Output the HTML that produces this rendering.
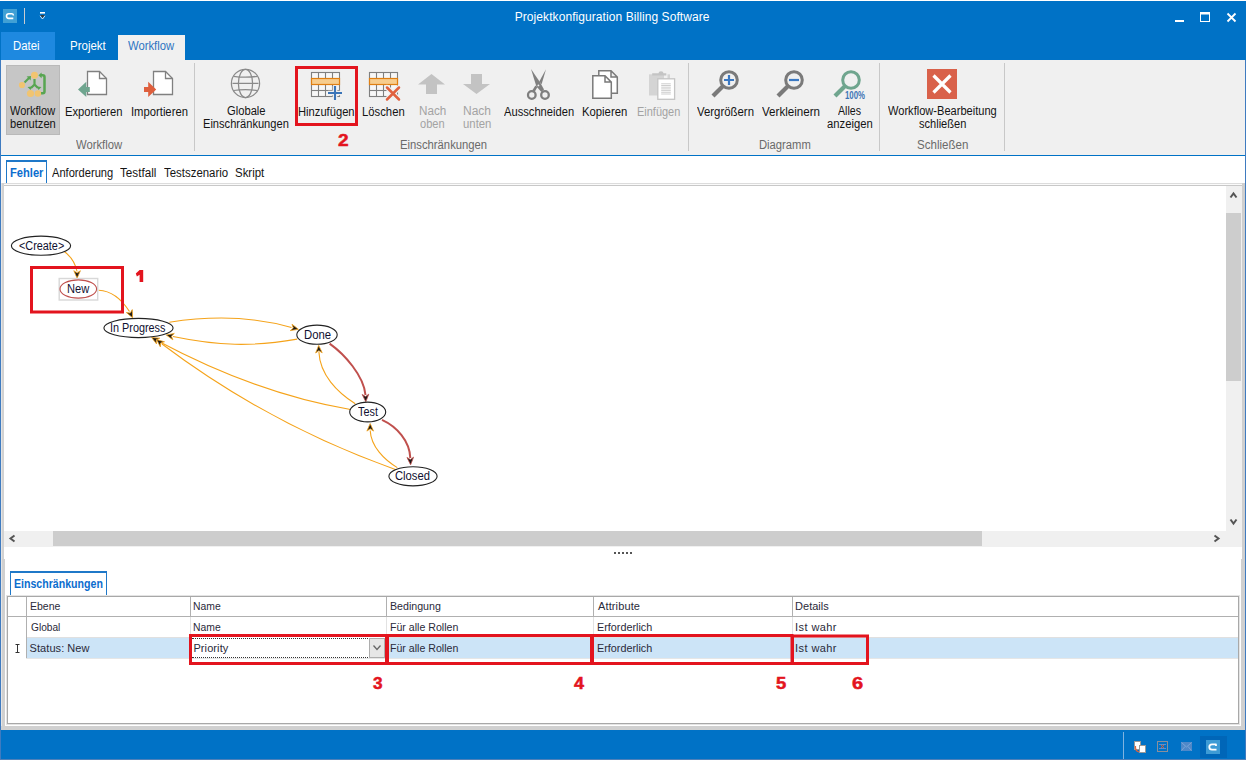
<!DOCTYPE html>
<html><head><meta charset="utf-8">
<style>
*{box-sizing:border-box}
html,body{margin:0;padding:0;width:1247px;height:760px;overflow:hidden;background:#ffffff;font-family:"Liberation Sans",sans-serif}
.a{position:absolute}
.tx{position:absolute;line-height:30px;white-space:nowrap;font-family:"Liberation Sans",sans-serif}
svg{position:absolute;left:0;top:0;overflow:visible}
</style></head><body>
<!-- window frame -->
<div class="a" style="left:0;top:1px;width:1246px;height:759px;background:#0072c6"></div>
<!-- file tab -->
<div class="a" style="left:1px;top:32px;width:54px;height:28px;background:#1e89e0"></div>
<!-- workflow tab -->
<div class="a" style="left:118px;top:35px;width:67px;height:25px;background:#f0f0f0"></div>
<!-- ribbon -->
<div class="a" style="left:1px;top:60px;width:1244px;height:95px;background:#f0f0f0"></div>
<!-- separators -->
<div class="a" style="left:194px;top:63px;width:1px;height:88px;background:#c8c8c8"></div>
<div class="a" style="left:688px;top:63px;width:1px;height:88px;background:#c8c8c8"></div>
<div class="a" style="left:879px;top:63px;width:1px;height:88px;background:#c8c8c8"></div>
<div class="a" style="left:1004px;top:63px;width:1px;height:88px;background:#c8c8c8"></div>
<!-- pressed button -->
<div class="a" style="left:6px;top:65px;width:54px;height:70px;background:#c6c6c6;border:1px solid #b9b9b9"></div>
<!-- content area -->
<div class="a" style="left:1px;top:156px;width:1244px;height:574px;background:#ffffff"></div>
<!-- doc tab -->
<div class="a" style="left:6px;top:160px;width:41px;height:24px;border:1px solid #1f78c8;border-top:2px solid #1f78c8;border-bottom:none;background:#fff"></div>
<div class="a" style="left:2px;top:183px;width:1241px;height:1px;background:#dcdcdc"></div>
<div class="a" style="left:3px;top:184px;width:1240px;height:1px;background:#fafafa"></div>
<div class="a" style="left:3px;top:185px;width:1240px;height:1px;background:#c8c8c8"></div>
<!-- diagram panel borders -->
<div class="a" style="left:1px;top:183px;width:3px;height:376px;background:#d2d2d2"></div><div class="a" style="left:1px;top:183px;width:1px;height:376px;background:#e4e4e4"></div>
<div class="a" style="left:1242px;top:183px;width:3px;height:376px;background:#cfcfcf"></div>
<!-- v scrollbar -->
<div class="a" style="left:1226px;top:186px;width:16px;height:345px;background:#f0f0f0"></div>
<div class="a" style="left:1226px;top:213px;width:15px;height:168px;background:#cdcdcd"></div>
<svg width="1247" height="760">
<path d="M1230.5 197.5 L1233.5 193.5 L1236.5 197.5" fill="none" stroke="#555" stroke-width="2"/>
<path d="M1230.5 519.5 L1233.5 523.5 L1236.5 519.5" fill="none" stroke="#555" stroke-width="2"/>
</svg>
<!-- h scrollbar -->
<div class="a" style="left:4px;top:531px;width:1238px;height:16px;background:#f0f0f0"></div>
<div class="a" style="left:53px;top:531px;width:929px;height:15px;background:#cdcdcd"></div>
<svg width="1247" height="760">
<path d="M14.5 535.5 L10.5 538.5 L14.5 541.5" fill="none" stroke="#555" stroke-width="2"/>
<path d="M1214.5 535.5 L1218.5 538.5 L1214.5 541.5" fill="none" stroke="#555" stroke-width="2"/>
</svg>
<!-- splitter dots -->
<div class="a" style="left:614px;top:552px;width:2px;height:2px;background:#555"></div>
<div class="a" style="left:618px;top:552px;width:2px;height:2px;background:#555"></div>
<div class="a" style="left:622px;top:552px;width:2px;height:2px;background:#555"></div>
<div class="a" style="left:626px;top:552px;width:2px;height:2px;background:#555"></div>
<div class="a" style="left:630px;top:552px;width:2px;height:2px;background:#555"></div>
<!-- bottom panel left/right borders -->
<div class="a" style="left:1px;top:559px;width:4px;height:171px;background:#d0d0d0"></div><div class="a" style="left:1px;top:559px;width:1px;height:171px;background:#e4e4e4"></div>
<div class="a" style="left:1241px;top:559px;width:4px;height:171px;background:#d0d0d0"></div>
<div class="a" style="left:1px;top:726px;width:1244px;height:4px;background:#d0d0d0"></div>
<!-- bottom tab -->
<div class="a" style="left:10px;top:571px;width:97px;height:24px;border:1px solid #1f78c8;border-top:2px solid #1f78c8;border-bottom:none;background:#fff"></div>
<!-- grid -->
<div class="a" style="left:6px;top:595px;width:1234px;height:130px;border:1px solid #e4e4e4"></div>
<div class="a" style="left:7px;top:596px;width:1232px;height:128px;border:1px solid #a8a8a8"></div>
<div class="a" style="left:8px;top:616px;width:1230px;height:1px;background:#b0b0b0"></div>
<div class="a" style="left:26px;top:638px;width:1212px;height:20px;background:#cce4f7"></div>
<div class="a" style="left:27px;top:637px;width:1211px;height:1px;background:#e0e0e0"></div>
<div class="a" style="left:26px;top:658px;width:1212px;height:1px;background:#e6e6e6"></div>
<div class="a" style="left:26px;top:597px;width:1px;height:61px;background:#b0b0b0"></div>
<div class="a" style="left:190px;top:597px;width:1px;height:19px;background:#b0b0b0"></div>
<div class="a" style="left:386px;top:597px;width:1px;height:19px;background:#b0b0b0"></div>
<div class="a" style="left:593px;top:597px;width:1px;height:19px;background:#b0b0b0"></div>
<div class="a" style="left:792px;top:597px;width:1px;height:19px;background:#b0b0b0"></div>
<div class="a" style="left:190px;top:617px;width:1px;height:20px;background:#e2e2e2"></div>
<div class="a" style="left:386px;top:617px;width:1px;height:20px;background:#e2e2e2"></div>
<div class="a" style="left:593px;top:617px;width:1px;height:20px;background:#e2e2e2"></div>
<div class="a" style="left:792px;top:617px;width:1px;height:20px;background:#e2e2e2"></div>
<!-- dropdown editor -->
<div class="a" style="left:191px;top:637px;width:195px;height:21px;background:#fff"></div>
<div class="a" style="left:192px;top:638px;width:178px;height:20px;border:1px dotted #333;border-left:none;border-right:none"></div>
<div class="a" style="left:369px;top:638px;width:16px;height:20px;background:#e6e6e6;border:1px solid #adadad"></div>
<svg width="1247" height="760">
<path d="M373.5 645.5 L377 649.5 L380.5 645.5" fill="none" stroke="#666" stroke-width="1.3"/>
<!-- I-beam cursor -->
<path d="M15.5 644.5 H19.5 M17.5 644.5 V652.5 M15.5 652.5 H19.5" fill="none" stroke="#333" stroke-width="1"/>
</svg>
<!-- status bar -->
<div class="a" style="left:1123px;top:732px;width:1px;height:27px;background:#7fb3e0"></div>
<div class="a" style="left:0;top:60px;width:1px;height:700px;background:#3f7bc0"></div>
<div class="a" style="left:1245px;top:60px;width:1px;height:700px;background:#3f7bc0"></div>
<div class="a" style="left:0;top:759px;width:1246px;height:1px;background:#4f80b8"></div>
<!-- ANNOT -->
<svg width="1247" height="760"><rect x="3" y="9" width="14" height="14" fill="#40a0d5"/>
<path d="M8.8 13.8 H12 Q13.4 13.8 13.4 15.6 M13.3 18.4 H8.8 A2.3 2.3 0 0 1 8.8 13.8" fill="none" stroke="#fff" stroke-width="1.6"/>
<rect x="24" y="8" width="1" height="16" fill="#c9ccd0"/>
<rect x="40" y="12" width="5" height="1.6" fill="#fff"/>
<path d="M40.3 15 H44.7 L42.5 18 Z" fill="#3a3a3a"/><path d="M40 15.8 L42.5 19 L45 15.8" fill="none" stroke="#fff" stroke-width="0.8"/>
<rect x="1175" y="20" width="9" height="2" fill="#fff"/>
<rect x="1200.5" y="12.5" width="9" height="9" fill="none" stroke="#fff" stroke-width="1"/><rect x="1200" y="12" width="10" height="2.5" fill="#fff"/>
<path d="M1227.5 13.5 L1235.5 21.5 M1235.5 13.5 L1227.5 21.5" stroke="#fff" stroke-width="1.8"/>
<path d="M24.5 82.5 L29.5 77.5" stroke="#58a552" stroke-width="2.2"/><path d="M31 76 L26.6 76.4 L30.6 80.4 Z" fill="#58a552"/>
<path d="M34.5 79 V84.5 L31 88 M34.5 84.5 L38 88" stroke="#58a552" stroke-width="2.2" fill="none"/>
<path d="M30.5 90 L27.5 87 L32 86.5 Z M38.5 90 L41.5 87 L37 86.5 Z" fill="#58a552"/>
<path d="M40.5 75.3 H42.8 Q44.5 75.3 44.5 77 V91.6 Q44.5 93.3 42.8 93.3 H40.5" stroke="#58a552" stroke-width="2.5" fill="none"/><path d="M38.4 75.3 L41.6 72.4 L41.6 78.2 Z" fill="#58a552"/>
<circle cx="34.5" cy="75.3" r="3.5" fill="#f1c470"/>
<circle cx="22" cy="85" r="3.1" fill="#f1c470"/>
<circle cx="30.5" cy="93.5" r="3.6" fill="#f1c470"/>
<circle cx="37.9" cy="93.5" r="3.2" fill="#f1c470"/>
<path d="M87.5 71.5 H99.5 L106.5 78.5 V94.5 H87.5 Z" fill="#fff" stroke="#808080" stroke-width="1.3" stroke-linejoin="miter"/><path d="M99.5 71.5 V78.5 H106.5" fill="none" stroke="#808080" stroke-width="1.3"/>
<path d="M78 89.4 L86.3 81.8 V87 H89.8 V91.9 H86.3 V97 Z" fill="#6fa58f" stroke="#f0f0f0" stroke-width="0" />
<path d="M153.5 71.5 H165.5 L172.5 78.5 V94.5 H153.5 Z" fill="#fff" stroke="#808080" stroke-width="1.3" stroke-linejoin="miter"/><path d="M165.5 71.5 V78.5 H172.5" fill="none" stroke="#808080" stroke-width="1.3"/>
<path d="M156.2 89.4 L148.2 81.8 V87 H144 V91.9 H148.2 V97 Z" fill="#de5f3d"/>
<g fill="none" stroke="#8a8a8a" stroke-width="1.25"><circle cx="245.5" cy="83.4" r="14.1"/><ellipse cx="245.5" cy="83.4" rx="7.1" ry="14.1"/><path d="M232.5 83.4 H258.5 M233.5 76.3 Q245.5 78 257.5 76.3 M233.5 90.5 Q245.5 88.8 257.5 90.5"/></g>
<g fill="none" stroke="#7f7f7f" stroke-width="1.1"><rect x="311.5" y="72.5" width="28" height="24" fill="#f7f7f7"/><path d="M318.5 72.5 V96.5"/><path d="M325.5 72.5 V96.5"/><path d="M332.5 72.5 V96.5"/><path d="M311.5 90.5 H339.5"/></g><rect x="311.5" y="78.5" width="28" height="6" fill="#f7cd8e" stroke="#e07f12" stroke-width="1.2"/>
<path d="M335 86 V100 M328 93 H342" stroke="#f0f0f0" stroke-width="4.6"/>
<path d="M335 86 V100 M328 93 H342" stroke="#3a74b8" stroke-width="2.1"/>
<g fill="none" stroke="#7f7f7f" stroke-width="1.1"><rect x="369.5" y="72.5" width="28" height="24" fill="#f7f7f7"/><path d="M376.5 72.5 V96.5"/><path d="M383.5 72.5 V96.5"/><path d="M390.5 72.5 V96.5"/><path d="M369.5 90.5 H397.5"/></g><rect x="369.5" y="78.5" width="28" height="6" fill="#f7cd8e" stroke="#e07f12" stroke-width="1.2"/>
<path d="M387 87.5 L399 99.5 M399 87.5 L387 99.5" stroke="#f0f0f0" stroke-width="5" stroke-linecap="round"/>
<path d="M387 87.5 L399 99.5 M399 87.5 L387 99.5" stroke="#e0603e" stroke-width="2.5" stroke-linecap="round"/>
<path d="M431.5 74 L445 84.5 H437 V94 H426 V84.5 H418 Z" fill="#c3c3c3"/>
<path d="M476.5 94 L490 84 H482 V74 H471 V84 H463 Z" fill="#c3c3c3"/>
<path d="M531 69 L540.2 82.6 L544 89.6 L541.4 92 L536.4 86.4 Z" fill="#7f7f7f"/>
<path d="M546 69.2 L541.6 84.2 L539.3 81.6 Z" fill="#7f7f7f"/>
<path d="M537.3 87.2 L534.6 92 L532.2 90.6 L535.4 85.6 Z" fill="#7f7f7f"/>
<g fill="none" stroke="#7f7f7f" stroke-width="2.3"><circle cx="531.8" cy="95" r="3.8"/><circle cx="545" cy="95" r="3.8"/></g>
<circle cx="538.4" cy="85.4" r="0.9" fill="#f0f0f0"/>
<path d="M598.8 70.7 H611 L617.3 77 V93.3 H598.8 Z M611 70.7 V77 H617.3" fill="#fff" stroke="#7a7a7a" stroke-width="1.5"/>
<path d="M592.8 75.8 H605 L611.3 82.1 V98.2 H592.8 Z M605 75.8 V82.1 H611.3" fill="#fff" stroke="#7a7a7a" stroke-width="1.5"/>
<rect x="649" y="74.3" width="15" height="21.2" fill="#d4d4d4"/><rect x="667.5" y="74.3" width="2.5" height="5" fill="#d4d4d4"/>
<path d="M652.2 75.5 V73.3 H658.5 A2.5 2 0 0 1 663.5 73.3 H666.3 V75.5 Z" fill="#c4c4c4"/>
<rect x="657.8" y="78.8" width="16.8" height="20.5" fill="#fff" stroke="#c4c4c4" stroke-width="1.3"/>
<path d="M661.2 83.8 H670.8 M661.2 85.5 H670.8 M661.2 87.2 H670.8 M661.2 88.9 H670.8 M661.2 90.6 H670.8 M661.2 92.3 H670.8 M661.2 94 H670.8" stroke="#c8c8c8" stroke-width="0.9"/>
<g fill="none" stroke="#7a7a7a"><circle cx="729" cy="80" r="8.3" stroke-width="3"/><path d="M722.8 86.2 L713 96" stroke-width="4.2" stroke-linecap="butt"/></g>
<path d="M729 75 V85 M724 80 H734" stroke="#3a78c2" stroke-width="2.2"/>
<g fill="none" stroke="#7a7a7a"><circle cx="794" cy="80" r="8.3" stroke-width="3"/><path d="M787.8 86.2 L778 96" stroke-width="4.2" stroke-linecap="butt"/></g>
<path d="M789 80 H799" stroke="#3a78c2" stroke-width="2.2"/>
<g fill="none" stroke="#6fa58e"><circle cx="851" cy="80" r="8.3" stroke-width="3"/><path d="M844.8 86.2 L835 96" stroke-width="4.2" stroke-linecap="butt"/></g>
<text x="845" y="99" font-family="Liberation Sans" font-size="10.3" font-weight="700" fill="#3d74b5" textLength="20" lengthAdjust="spacingAndGlyphs">100%</text>
<rect x="927" y="69" width="30" height="30" fill="#d9614a"/><path d="M933.5 75.5 L950.5 92.5 M950.5 75.5 L933.5 92.5" stroke="#fff" stroke-width="3.2"/>
<g><rect x="1134.5" y="741.5" width="6" height="8" fill="#fff" stroke="#999"/><rect x="1139.5" y="745.5" width="6" height="7" fill="#fff" stroke="#999"/><path d="M1135.5 746 Q1135 751 1139 752" stroke="#e0603a" fill="none" stroke-width="1.2"/></g>
<g><rect x="1157.5" y="741.5" width="10" height="10" fill="none" stroke="#8a8f9a"/><path d="M1159 744.5 H1166 M1159 748.5 H1166" stroke="#5b8fd0"/><path d="M1161 745 L1164 748 M1164 745 L1161 748" stroke="#e0603a"/></g>
<g><rect x="1181" y="742" width="11" height="9" fill="#4f88c8"/><path d="M1181.5 742.5 L1186.5 747 L1191.5 742.5 M1181.5 750.5 L1185 746.5 M1191.5 750.5 L1188 746.5" stroke="#7aa6d8" fill="none"/></g>
<rect x="1200" y="736" width="27" height="22" fill="#0066b8"/><rect x="1206" y="740" width="14" height="14" fill="#3e9bd5"/>
<path d="M1216.5 744.3 H1212 A2.7 2.7 0 0 0 1212 749.7 H1216.5 M1216 744.3 V746" fill="none" stroke="#fff" stroke-width="1.8"/>
<path d="M64.5 251.8 C71.9 257.1, 75.1 262.9, 77.1 271.5" fill="none" stroke="#f5a31a" stroke-width="1.1"/>
<path d="M98.7 290.2 C112.2 290.8, 122.7 300.9, 129.5 311.5" fill="none" stroke="#f5a31a" stroke-width="1.1"/>
<path d="M169.3 322.2 C209.9 316.0, 251.8 316.0, 291.5 327.5" fill="none" stroke="#f5a31a" stroke-width="1.1"/>
<path d="M297.2 339.1 C251.9 347.1, 217.9 345.8, 173.0 336.5" fill="none" stroke="#f5a31a" stroke-width="1.1"/>
<path d="M350.5 409.5 C282.7 398.2, 218.5 373.2, 158.0 341.0" fill="none" stroke="#f5a31a" stroke-width="1.1"/>
<path d="M396.0 469.7 C312.3 440.1, 232.9 397.4, 162.0 344.0" fill="none" stroke="#f5a31a" stroke-width="1.1"/>
<path d="M355.3 403.7 C337.2 392.3, 319.9 374.6, 318.9 352.0" fill="none" stroke="#f5a31a" stroke-width="1.1"/>
<path d="M329.6 343.6 C344.4 354.1, 363.8 375.7, 365.5 395.0" fill="none" stroke="#c0504d" stroke-width="2"/>
<path d="M382.0 419.9 C396.9 426.7, 409.7 441.0, 410.3 458.0" fill="none" stroke="#c0504d" stroke-width="2"/>
<path d="M397.3 467.6 C384.3 459.9, 371.0 446.6, 370.2 430.5" fill="none" stroke="#f5a31a" stroke-width="1.1"/>
<path d="M77.10 278.20 L73.80 270.70 L77.10 272.95 L80.40 270.70 Z" fill="#1a1a1a" stroke="#f5a31a" stroke-width="0.8" stroke-linejoin="miter"/>
<path d="M132.60 317.80 L126.33 312.53 L130.28 313.09 L132.25 309.61 Z" fill="#1a1a1a" stroke="#f5a31a" stroke-width="0.8" stroke-linejoin="miter"/>
<path d="M298.40 329.30 L290.31 330.60 L293.32 327.97 L291.98 324.21 Z" fill="#1a1a1a" stroke="#f5a31a" stroke-width="0.8" stroke-linejoin="miter"/>
<path d="M166.30 335.00 L174.34 333.42 L171.42 336.15 L172.90 339.86 Z" fill="#1a1a1a" stroke="#f5a31a" stroke-width="0.8" stroke-linejoin="miter"/>
<path d="M151.60 337.50 L159.76 338.20 L156.21 340.02 L156.60 343.99 Z" fill="#1a1a1a" stroke="#f5a31a" stroke-width="0.8" stroke-linejoin="miter"/>
<path d="M156.60 339.60 L164.50 341.78 L160.67 342.92 L160.33 346.90 Z" fill="#1a1a1a" stroke="#f5a31a" stroke-width="0.8" stroke-linejoin="miter"/>
<path d="M318.70 345.40 L322.23 352.80 L318.86 350.65 L315.63 353.00 Z" fill="#1a1a1a" stroke="#f5a31a" stroke-width="0.8" stroke-linejoin="miter"/>
<path d="M365.80 401.80 L362.17 394.45 L365.57 396.56 L368.77 394.16 Z" fill="#1a1a1a" stroke="#c0504d" stroke-width="0.8" stroke-linejoin="miter"/>
<path d="M410.60 464.80 L406.97 457.45 L410.37 459.56 L413.57 457.16 Z" fill="#1a1a1a" stroke="#c0504d" stroke-width="0.8" stroke-linejoin="miter"/>
<path d="M370.20 423.60 L373.50 431.10 L370.20 428.85 L366.90 431.10 Z" fill="#1a1a1a" stroke="#f5a31a" stroke-width="0.8" stroke-linejoin="miter"/>
<rect x="59.2" y="278.5" width="38.5" height="21.5" fill="#fff" stroke="#d8d8d8" stroke-width="1.4"/>
<ellipse cx="41" cy="245.7" rx="29.6" ry="9.6" fill="#fff" stroke="#222" stroke-width="1.1"/>
<ellipse cx="78.3" cy="289" rx="18.3" ry="9.1" fill="#fff" stroke="#c0504d" stroke-width="1.1"/>
<ellipse cx="138.5" cy="328" rx="34.6" ry="9.6" fill="#fff" stroke="#222" stroke-width="1.1"/>
<ellipse cx="317" cy="334.7" rx="20.200000000000003" ry="9.6" fill="#fff" stroke="#222" stroke-width="1.1"/>
<ellipse cx="367.7" cy="412" rx="18.0" ry="9.9" fill="#fff" stroke="#222" stroke-width="1.1"/>
<ellipse cx="413" cy="476.3" rx="24.1" ry="9.6" fill="#fff" stroke="#222" stroke-width="1.1"/></svg>
<div class="tx" style="left:514.70px;top:2.00px;font-size:12px;font-weight:400;color:#ffffff;letter-spacing:0.075px;">Projektkonfiguration Billing Software</div>
<div class="tx" style="left:13.45px;top:31.00px;font-size:12px;font-weight:400;color:#ffffff;transform:scaleX(0.9462);transform-origin:0 0;">Datei</div>
<div class="tx" style="left:69.54px;top:31.00px;font-size:12px;font-weight:400;color:#ffffff;transform:scaleX(0.9583);transform-origin:0 0;">Projekt</div>
<div class="tx" style="left:128.00px;top:31.00px;font-size:12px;font-weight:400;color:#2e75c2;transform:scaleX(0.9388);transform-origin:0 0;">Workflow</div>
<div class="tx" style="left:10.00px;top:96.00px;font-size:12px;font-weight:400;color:#141414;transform:scaleX(0.9184);transform-origin:0 0;">Workflow</div>
<div class="tx" style="left:9.57px;top:109.00px;font-size:12px;font-weight:400;color:#141414;transform:scaleX(0.9271);transform-origin:0 0;">benutzen</div>
<div class="tx" style="left:64.86px;top:97.00px;font-size:12px;font-weight:400;color:#141414;transform:scaleX(0.9367);transform-origin:0 0;">Exportieren</div>
<div class="tx" style="left:130.56px;top:97.00px;font-size:12px;font-weight:400;color:#141414;transform:scaleX(0.9373);transform-origin:0 0;">Importieren</div>
<div class="tx" style="left:226.77px;top:96.00px;font-size:12px;font-weight:400;color:#141414;transform:scaleX(0.9325);transform-origin:0 0;">Globale</div>
<div class="tx" style="left:202.67px;top:109.00px;font-size:12px;font-weight:400;color:#141414;transform:scaleX(0.9253);transform-origin:0 0;">Einschränkungen</div>
<div class="tx" style="left:297.67px;top:97.00px;font-size:12px;font-weight:400;color:#141414;transform:scaleX(0.9322);transform-origin:0 0;">Hinzufügen</div>
<div class="tx" style="left:362.36px;top:97.00px;font-size:12px;font-weight:400;color:#141414;transform:scaleX(0.9409);transform-origin:0 0;">Löschen</div>
<div class="tx" style="left:418.53px;top:96.00px;font-size:12px;font-weight:400;color:#a3a3a3;transform:scaleX(0.9731);transform-origin:0 0;">Nach</div>
<div class="tx" style="left:420.00px;top:109.00px;font-size:12px;font-weight:400;color:#a3a3a3;transform:scaleX(0.9231);transform-origin:0 0;">oben</div>
<div class="tx" style="left:463.00px;top:96.00px;font-size:12px;font-weight:400;color:#a3a3a3;letter-spacing:0.000px;">Nach</div>
<div class="tx" style="left:462.55px;top:109.00px;font-size:12px;font-weight:400;color:#a3a3a3;transform:scaleX(0.9464);transform-origin:0 0;">unten</div>
<div class="tx" style="left:504.00px;top:97.00px;font-size:12px;font-weight:400;color:#141414;transform:scaleX(0.9307);transform-origin:0 0;">Ausschneiden</div>
<div class="tx" style="left:582.46px;top:97.00px;font-size:12px;font-weight:400;color:#141414;transform:scaleX(0.9413);transform-origin:0 0;">Kopieren</div>
<div class="tx" style="left:636.69px;top:97.00px;font-size:12px;font-weight:400;color:#a3a3a3;transform:scaleX(0.9130);transform-origin:0 0;">Einfügen</div>
<div class="tx" style="left:697.00px;top:97.00px;font-size:12px;font-weight:400;color:#141414;transform:scaleX(0.9492);transform-origin:0 0;">Vergrößern</div>
<div class="tx" style="left:762.00px;top:97.00px;font-size:12px;font-weight:400;color:#141414;transform:scaleX(0.9661);transform-origin:0 0;">Verkleinern</div>
<div class="tx" style="left:838.00px;top:96.00px;font-size:12px;font-weight:400;color:#141414;transform:scaleX(0.8846);transform-origin:0 0;">Alles</div>
<div class="tx" style="left:827.00px;top:109.00px;font-size:12px;font-weight:400;color:#141414;transform:scaleX(0.9375);transform-origin:0 0;">anzeigen</div>
<div class="tx" style="left:888.00px;top:96.00px;font-size:12px;font-weight:400;color:#141414;transform:scaleX(0.9231);transform-origin:0 0;">Workflow-Bearbeitung</div>
<div class="tx" style="left:919.00px;top:109.00px;font-size:12px;font-weight:400;color:#141414;transform:scaleX(0.9216);transform-origin:0 0;">schließen</div>
<div class="tx" style="left:76.00px;top:130.00px;font-size:12px;font-weight:400;color:#6a6a6a;transform:scaleX(0.9388);transform-origin:0 0;">Workflow</div>
<div class="tx" style="left:399.76px;top:130.00px;font-size:12px;font-weight:400;color:#6a6a6a;transform:scaleX(0.9396);transform-origin:0 0;">Einschränkungen</div>
<div class="tx" style="left:759.46px;top:130.00px;font-size:12px;font-weight:400;color:#6a6a6a;transform:scaleX(0.9370);transform-origin:0 0;">Diagramm</div>
<div class="tx" style="left:917.04px;top:130.00px;font-size:12px;font-weight:400;color:#6a6a6a;transform:scaleX(0.9615);transform-origin:0 0;">Schließen</div>
<div class="tx" style="left:9.87px;top:158.00px;font-size:12px;font-weight:700;color:#0b6dce;transform:scaleX(0.9286);transform-origin:0 0;">Fehler</div>
<div class="tx" style="left:51.70px;top:158.00px;font-size:12px;font-weight:400;color:#141414;transform:scaleX(0.9262);transform-origin:0 0;">Anforderung</div>
<div class="tx" style="left:120.00px;top:158.00px;font-size:12px;font-weight:400;color:#141414;transform:scaleX(0.9730);transform-origin:0 0;">Testfall</div>
<div class="tx" style="left:164.00px;top:158.00px;font-size:12px;font-weight:400;color:#141414;transform:scaleX(0.9522);transform-origin:0 0;">Testszenario</div>
<div class="tx" style="left:235.35px;top:158.00px;font-size:12px;font-weight:400;color:#141414;transform:scaleX(0.9533);transform-origin:0 0;">Skript</div>
<div class="tx" style="left:18.80px;top:231.00px;font-size:12px;font-weight:400;color:#101030;transform:scaleX(0.9041);transform-origin:0 0;">&lt;Create&gt;</div>
<div class="tx" style="left:67.07px;top:274.00px;font-size:12px;font-weight:400;color:#101030;transform:scaleX(0.9261);transform-origin:0 0;">New</div>
<div class="tx" style="left:110.40px;top:313.00px;font-size:12px;font-weight:400;color:#101030;transform:scaleX(0.9033);transform-origin:0 0;">In Progress</div>
<div class="tx" style="left:303.56px;top:320.00px;font-size:12px;font-weight:400;color:#101030;transform:scaleX(0.9444);transform-origin:0 0;">Done</div>
<div class="tx" style="left:357.70px;top:397.00px;font-size:12px;font-weight:400;color:#101030;transform:scaleX(0.9045);transform-origin:0 0;">Test</div>
<div class="tx" style="left:395.06px;top:461.00px;font-size:12px;font-weight:400;color:#101030;transform:scaleX(0.9361);transform-origin:0 0;">Closed</div>
<div class="tx" style="left:14.12px;top:569.00px;font-size:12px;font-weight:700;color:#0b6dce;transform:scaleX(0.8828);transform-origin:0 0;">Einschränkungen</div>
<div class="tx" style="left:29.65px;top:591.00px;font-size:11px;font-weight:400;color:#2a2a3a;transform:scaleX(0.9548);transform-origin:0 0;">Ebene</div>
<div class="tx" style="left:193.46px;top:591.00px;font-size:11px;font-weight:400;color:#2a2a3a;transform:scaleX(0.9429);transform-origin:0 0;">Name</div>
<div class="tx" style="left:389.73px;top:591.00px;font-size:11px;font-weight:400;color:#2a2a3a;transform:scaleX(0.9667);transform-origin:0 0;">Bedingung</div>
<div class="tx" style="left:598.00px;top:591.00px;font-size:11px;font-weight:400;color:#2a2a3a;letter-spacing:0.125px;">Attribute</div>
<div class="tx" style="left:795.00px;top:591.00px;font-size:11px;font-weight:400;color:#2a2a3a;letter-spacing:0.033px;">Details</div>
<div class="tx" style="left:30.60px;top:612.00px;font-size:11px;font-weight:400;color:#2a2a3a;transform:scaleX(0.9226);transform-origin:0 0;">Global</div>
<div class="tx" style="left:193.46px;top:612.00px;font-size:11px;font-weight:400;color:#2a2a3a;transform:scaleX(0.9429);transform-origin:0 0;">Name</div>
<div class="tx" style="left:389.74px;top:612.00px;font-size:11px;font-weight:400;color:#2a2a3a;transform:scaleX(0.9638);transform-origin:0 0;">Für alle Rollen</div>
<div class="tx" style="left:597.02px;top:612.00px;font-size:11px;font-weight:400;color:#2a2a3a;transform:scaleX(0.9818);transform-origin:0 0;">Erforderlich</div>
<div class="tx" style="left:795.00px;top:612.00px;font-size:11px;font-weight:400;color:#2a2a3a;letter-spacing:0.429px;">Ist wahr</div>
<div class="tx" style="left:29.60px;top:633.00px;font-size:11px;font-weight:400;color:#2a2a3a;letter-spacing:0.060px;">Status: New</div>
<div class="tx" style="left:193.40px;top:633.00px;font-size:11px;font-weight:400;color:#2a2a3a;letter-spacing:0.100px;">Priority</div>
<div class="tx" style="left:389.74px;top:633.00px;font-size:11px;font-weight:400;color:#2a2a3a;transform:scaleX(0.9638);transform-origin:0 0;">Für alle Rollen</div>
<div class="tx" style="left:597.02px;top:633.00px;font-size:11px;font-weight:400;color:#2a2a3a;transform:scaleX(0.9818);transform-origin:0 0;">Erforderlich</div>
<div class="tx" style="left:795.00px;top:633.00px;font-size:11px;font-weight:400;color:#2a2a3a;letter-spacing:0.429px;">Ist wahr</div>
<div class="tx" style="left:338.30px;top:124.80px;font-size:16.5px;font-weight:700;color:#e3141e;transform:scaleX(1.1556);transform-origin:0 0;-webkit-text-stroke:0.5px #e3141e">2</div>
<div class="tx" style="left:372.80px;top:667.80px;font-size:16.5px;font-weight:700;color:#e3141e;transform:scaleX(1.0444);transform-origin:0 0;-webkit-text-stroke:0.5px #e3141e">3</div>
<div class="tx" style="left:574.30px;top:667.80px;font-size:16.5px;font-weight:700;color:#e3141e;transform:scaleX(1.0889);transform-origin:0 0;-webkit-text-stroke:0.5px #e3141e">4</div>
<div class="tx" style="left:775.99px;top:667.80px;font-size:16.5px;font-weight:700;color:#e3141e;transform:scaleX(1.1125);transform-origin:0 0;-webkit-text-stroke:0.5px #e3141e">5</div>
<div class="tx" style="left:851.59px;top:667.80px;font-size:16.5px;font-weight:700;color:#e3141e;transform:scaleX(1.2125);transform-origin:0 0;-webkit-text-stroke:0.5px #e3141e">6</div>
<svg width="1247" height="760"><rect x="296.5" y="67.5" width="60" height="57" fill="none" stroke="#e3141e" stroke-width="3"/>
<path d="M139.6 270 H143.2 V282 H139.6 V274.8 L136.9 276.4 L135.8 273.6 Z" fill="#e3141e"/>
<rect x="31.5" y="267.5" width="91" height="44.5" fill="none" stroke="#e3141e" stroke-width="3"/>
<rect x="190.5" y="635.5" width="196" height="28" fill="none" stroke="#e3141e" stroke-width="3"/>
<rect x="387.5" y="635.5" width="204" height="28" fill="none" stroke="#e3141e" stroke-width="3"/>
<rect x="592.5" y="635.5" width="199.5" height="28" fill="none" stroke="#e3141e" stroke-width="3"/>
<rect x="792.5" y="636.0" width="75" height="27.5" fill="none" stroke="#e3141e" stroke-width="3"/></svg>
</body></html>
